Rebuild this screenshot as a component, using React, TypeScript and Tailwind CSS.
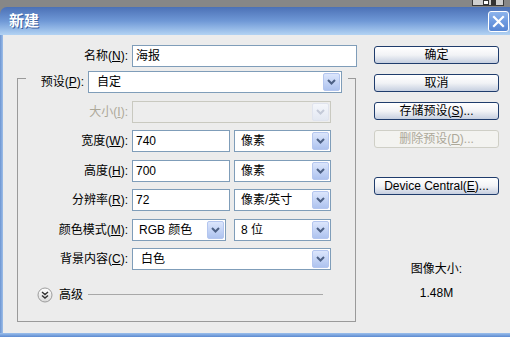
import React from "react";

const FONT = { fontFamily: '"Liberation Sans", "Noto Sans CJK SC", sans-serif' };

function Arrow({ disabled }: { disabled?: boolean }) {
  return (
    <span
      className={
        "mr-[1px] flex h-[18px] w-[17px] shrink-0 items-center justify-center rounded-[2px] border " +
        (disabled
          ? "border-[#e0e4ee] bg-gradient-to-b from-[#f4f6fb] to-[#e3e8f2]"
          : "border-[#b4c6ef] bg-gradient-to-b from-[#dce6fc] to-[#aec3ef]")
      }
    >
      <svg width="9" height="6" viewBox="0 0 9 6">
        <path
          d="M1 1 L4.5 4.5 L8 1"
          fill="none"
          stroke={disabled ? "#c4cad8" : "#4d6185"}
          strokeWidth="2"
        />
      </svg>
    </span>
  );
}

function Select({
  value,
  className,
  disabled,
  pad = "pl-[7px]",
}: {
  value: string;
  className: string;
  disabled?: boolean;
  pad?: string;
}) {
  return (
    <div
      className={
        "flex h-[22px] shrink-0 items-center border " +
        (disabled ? "border-[#c9c9c0] bg-[#ededed] " : "border-[#7f9db9] bg-white ") +
        pad +
        " " +
        className
      }
    >
      <span className="flex-1 truncate text-[12px] leading-[14px] text-black">{value}</span>
      <Arrow disabled={disabled} />
    </div>
  );
}

function Input({ value, className }: { value: string; className: string }) {
  return (
    <div
      className={
        "flex h-[22px] shrink-0 items-center border border-[#7f9db9] bg-white pl-[3px] text-[12px] leading-[14px] text-black " +
        className
      }
    >
      {value}
    </div>
  );
}

function Label({
  text,
  k,
  className,
  disabled,
}: {
  text: string;
  k: string;
  className: string;
  disabled?: boolean;
}) {
  return (
    <div
      className={
        "shrink-0 text-right text-[12px] leading-[14px] " +
        (disabled ? "text-[#aca899] " : "text-black ") +
        className
      }
    >
      {text}(<u>{k}</u>):
    </div>
  );
}

function Btn({
  children,
  disabled,
  className = "",
}: {
  children: React.ReactNode;
  disabled?: boolean;
  className?: string;
}) {
  return (
    <div
      className={
        "flex h-[18px] w-[125px] items-center justify-center rounded-[3px] border text-[12px] leading-[14px] " +
        (disabled
          ? "border-[#cfcfc6] bg-[#f3f3f0] text-[#aca899] "
          : "border-[#1f3c6c] bg-gradient-to-b from-white via-[#f2f3f6] to-[#c6cfe0] text-black ") +
        className
      }
    >
      {children}
    </div>
  );
}

export default function App() {
  return (
    <div className="flex h-[337px] w-[510px] flex-col overflow-hidden bg-[#878787]" style={FONT}>
      {/* strip behind window */}
      <div className="flex h-[7px] shrink-0 justify-end pr-[6px]">
        <div className="flex h-[6px] w-[32px] items-start gap-[2px] border-x border-b border-[#3a3a3a] bg-[#cfcfcf] pl-[10px]">
          <div className="h-[5px] w-[6px] border border-[#333] bg-white" />
          <div className="h-[5px] w-[5px] bg-[#333]" />
        </div>
      </div>

      {/* window */}
      <div className="flex flex-1 flex-col overflow-hidden rounded-tl-[7px]">
        {/* title bar */}
        <div className="flex h-[28px] shrink-0 items-center bg-gradient-to-b from-[#4c71b6] via-[#6f98d6] to-[#b3d3f3] pl-[9px] pr-[1px]">
          <span className="flex-1 text-[15px] font-bold leading-[18px] text-white [text-shadow:1px_1px_0_#3b5f9f]">
            新建
          </span>
          <div className="flex h-[21px] w-[21px] items-center justify-center rounded-[3px] border border-white bg-gradient-to-b from-[#8db4ec] via-[#6f9be0] to-[#5685d3]">
            <svg width="13" height="13" viewBox="0 0 13 13">
              <path d="M2 2 L11 11 M11 2 L2 11" stroke="white" strokeWidth="2.2" strokeLinecap="square" />
            </svg>
          </div>
        </div>

        {/* body */}
        <div className="flex flex-1">
          <div className="w-[3px] shrink-0 bg-gradient-to-r from-[#6d95d2] to-[#9ebfe9]" />
          <div className="flex flex-1 bg-[#ececec] pt-[10px]">
            {/* left column */}
            <div className="ml-[14px] flex w-[339px] shrink-0 flex-col">
              {/* name row */}
              <div className="flex h-[22px] items-center">
                <Label text="名称" k="N" className="w-[111px]" />
                <Input value="海报" className="ml-[4px] w-[225px]" />
              </div>

              {/* group top row */}
              <div className="mt-[4px] flex h-[22px]">
                <div className="mt-[7px] w-[9px] border-l border-t border-[#9a9a9a]" />
                <div className="flex w-[58px] items-center justify-end">
                  <Label text="预设" k="P" className="" />
                </div>
                <Select value="自定" className="ml-[4px] w-[254px]" pad="pl-[8px]" />
                <div className="ml-[6px] mt-[7px] flex-1 border-r border-t border-[#9a9a9a]" />
              </div>

              {/* group body */}
              <div className="flex flex-col border-x border-b border-[#9a9a9a] pb-[18px] pt-[8px]">
                <div className="flex flex-col gap-[7.4px]">
                  <div className="flex h-[22px] items-center">
                    <Label text="大小" k="I" className="w-[110px]" disabled />
                    <Select value="" className="ml-[4px] w-[199px]" disabled />
                  </div>
                  <div className="flex h-[22px] items-center">
                    <Label text="宽度" k="W" className="w-[110px]" />
                    <Input value="740" className="ml-[4px] w-[98px]" />
                    <Select value="像素" className="ml-[4px] w-[97px]" pad="pl-[6px]" />
                  </div>
                  <div className="flex h-[22px] items-center">
                    <Label text="高度" k="H" className="w-[110px]" />
                    <Input value="700" className="ml-[4px] w-[98px]" />
                    <Select value="像素" className="ml-[4px] w-[97px]" pad="pl-[6px]" />
                  </div>
                  <div className="flex h-[22px] items-center">
                    <Label text="分辨率" k="R" className="w-[110px]" />
                    <Input value="72" className="ml-[4px] w-[98px]" />
                    <Select value="像素/英寸" className="ml-[4px] w-[97px]" pad="pl-[6px]" />
                  </div>
                  <div className="flex h-[22px] items-center">
                    <Label text="颜色模式" k="M" className="w-[110px]" />
                    <Select value="RGB 颜色" className="ml-[4px] w-[94px]" pad="pl-[6px]" />
                    <Select value="8 位" className="ml-[8px] w-[97px]" pad="pl-[6px]" />
                  </div>
                  <div className="flex h-[22px] items-center">
                    <Label text="背景内容" k="C" className="w-[110px]" />
                    <Select value="白色" className="ml-[4px] w-[199px]" pad="pl-[8px]" />
                  </div>
                </div>

                {/* advanced */}
                <div className="ml-[19px] mr-[32px] mt-[17px] flex h-[16px] items-center">
                  <svg width="16" height="16" viewBox="0 0 16 16" className="shrink-0">
                    <defs>
                      <linearGradient id="cg" x1="0" y1="0" x2="0" y2="1">
                        <stop offset="0" stopColor="#ffffff" />
                        <stop offset="1" stopColor="#d9d9d9" />
                      </linearGradient>
                    </defs>
                    <circle cx="8" cy="8" r="7" fill="url(#cg)" stroke="#9c9c9c" />
                    <path d="M5 5 L8 7.5 L11 5 M5 8.5 L8 11 L11 8.5" fill="none" stroke="#333" strokeWidth="1.4" />
                  </svg>
                  <span className="ml-[6px] text-[12px] leading-[14px] text-black">高级</span>
                  <div className="ml-[5px] flex-1 border-t border-[#a8a8a8]" />
                </div>
              </div>
            </div>

            {/* right column */}
            <div className="ml-[18px] flex w-[125px] shrink-0 flex-col items-center pt-[1px]">
              <Btn>确定</Btn>
              <Btn className="mt-[10px]">取消</Btn>
              <Btn className="mt-[10px]">
                存储预设(<u>S</u>)...
              </Btn>
              <Btn className="mt-[10px]" disabled>
                删除预设(<u>D</u>)...
              </Btn>
              <Btn className="mt-[29px]">
                Device Central(<u>E</u>)...
              </Btn>
              <div className="mt-[67px] text-[12px] leading-[14px] text-black">图像大小:</div>
              <div className="mt-[10px] text-[12px] leading-[14px] text-black">1.48M</div>
            </div>
          </div>
        </div>

        {/* bottom frame */}
        <div className="h-[4px] shrink-0 bg-gradient-to-b from-[#9cc0ec] to-[#5d8ad0]" />
      </div>
    </div>
  );
}
